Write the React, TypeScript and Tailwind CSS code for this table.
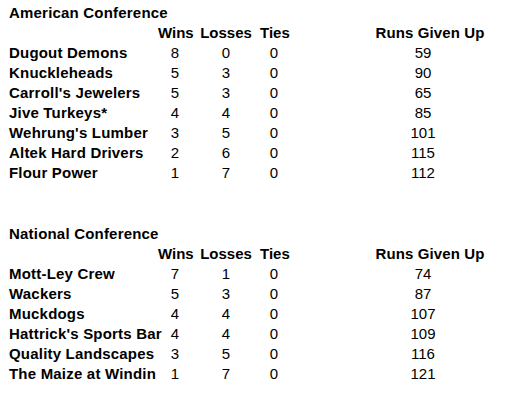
import React from "react";

type Row = [string, number, number, number, number];

const american: Row[] = [
  ["Dugout Demons", 8, 0, 0, 59],
  ["Knuckleheads", 5, 3, 0, 90],
  ["Carroll's Jewelers", 5, 3, 0, 65],
  ["Jive Turkeys*", 4, 4, 0, 85],
  ["Wehrung's Lumber", 3, 5, 0, 101],
  ["Altek Hard Drivers", 2, 6, 0, 115],
  ["Flour Power", 1, 7, 0, 112],
];

const national: Row[] = [
  ["Mott-Ley Crew", 7, 1, 0, 74],
  ["Wackers", 5, 3, 0, 87],
  ["Muckdogs", 4, 4, 0, 107],
  ["Hattrick's Sports Bar", 4, 4, 0, 109],
  ["Quality Landscapes", 3, 5, 0, 116],
  ["The Maize at Windin", 1, 7, 0, 121],
];

const grid = "grid grid-cols-[149px_34px_68px_28px_86px_112px] h-[20px] items-center leading-[20px]";

function Section({ title, rows }: { title: string; rows: Row[] }) {
  return (
    <div className="flex flex-col">
      <div className="h-[20px] leading-[20px] font-bold tracking-[0.2px]">{title}</div>
      <div className={grid + " font-bold"}>
        <div />
        <div className="text-center">Wins</div>
        <div className="text-center">Losses</div>
        <div className="text-center">Ties</div>
        <div />
        <div className="text-center tracking-[0.1px]">Runs Given Up</div>
      </div>
      {rows.map((r) => (
        <div key={r[0]} className={grid}>
          <div className="font-bold whitespace-nowrap tracking-[0.2px]">{r[0]}</div>
          <div className="text-center">{r[1]}</div>
          <div className="text-center">{r[2]}</div>
          <div className="text-center">{r[3]}</div>
          <div />
          <div className="text-center pr-[14px]">{r[4]}</div>
        </div>
      ))}
    </div>
  );
}

export default function App() {
  return (
    <div className="w-[505px] h-[411px] bg-white text-black text-[15px] font-['Liberation_Sans',Arial,sans-serif] pl-[9px] pt-[3px] flex flex-col">
      <Section title="American Conference" rows={american} />
      <div className="h-[41px]" />
      <Section title="National Conference" rows={national} />
    </div>
  );
}
